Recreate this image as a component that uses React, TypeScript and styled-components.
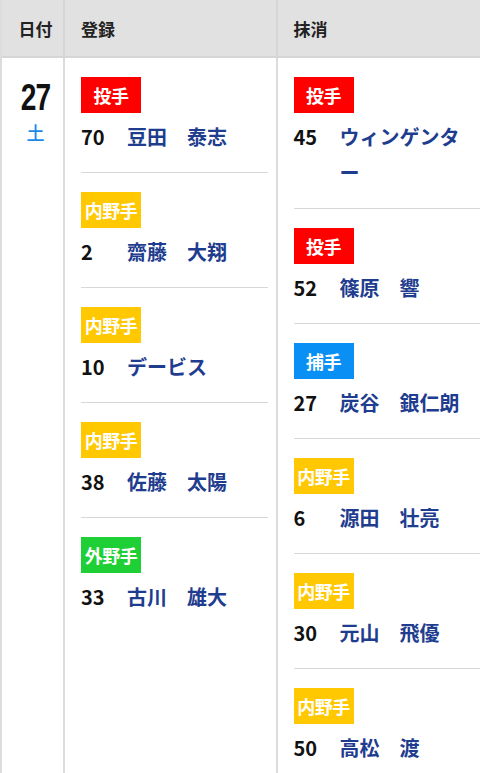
import React from "react";
import styled, { createGlobalStyle } from "styled-components";

const GlobalStyle = createGlobalStyle`
  html, body {
    margin: 0;
    padding: 0;
    overflow-x: hidden;
    background: #fff;
  }
  body {
    font-family: "Noto Sans CJK JP", "Noto Sans", sans-serif;
    color: #111;
  }
`;

const Table = styled.div`
  width: 488px;
  display: grid;
  grid-template-columns: 63px 1fr 1fr;
  grid-template-rows: 58px auto;
  border-left: 2px solid #dcdcdc;
`;

const HeadCell = styled.div<{ $center?: boolean }>`
  background: #e1e1e1;
  border-bottom: 2px solid #d6d6d6;
  border-right: 2px solid #d6d6d6;
  display: flex;
  align-items: center;
  justify-content: ${(p) => (p.$center ? "center" : "flex-start")};
  padding: ${(p) => (p.$center ? "0 0 0 6px" : "0 0 0 16px")};
  font-size: 17px;
  font-weight: 700;
  color: #222;
`;

const DateCell = styled.div`
  border-right: 2px solid #dcdcdc;
  display: flex;
  flex-direction: column;
  align-items: center;
  padding: 19px 0 0 6px;
  min-height: 715px;
`;

const Day = styled.div`
  font-family: "Liberation Sans", "Arial", sans-serif;
  font-size: 37px;
  font-weight: 700;
  line-height: 42px;
  letter-spacing: -1px;
  color: #111;
  transform: scaleX(0.76);
`;

const Weekday = styled.div`
  font-size: 18px;
  font-weight: 500;
  line-height: 26px;
  color: #1a8ae6;
`;

const Column = styled.div`
  border-right: 2px solid #dcdcdc;
  padding: 0 8px 0 16px;
`;

const Item = styled.div`
  padding: 19px 0 17px;
  & + & {
    border-top: 1px solid #d8d8d8;
  }
`;

const Badge = styled.div<{ $color: string }>`
  width: 60px;
  height: 36px;
  background: ${(p) => p.$color};
  color: #fff;
  font-size: 18px;
  font-weight: 700;
  display: flex;
  align-items: center;
  justify-content: center;
  letter-spacing: -0.5px;
`;

const Row = styled.div`
  display: flex;
  margin-top: 6px;
  font-size: 20px;
  font-weight: 700;
  line-height: 36px;
`;

const Num = styled.span`
  flex: 0 0 46px;
  color: #111;
`;

const Name = styled.span`
  flex: 1;
  min-width: 0;
  color: #1f3d8f;
  padding-right: 2px;
`;

const RED = "#ff0000";
const YELLOW = "#ffc800";
const BLUE = "#0a90f5";
const GREEN = "#1ecf35";

type Player = { pos: string; color: string; no: string; name: string };

const added: Player[] = [
  { pos: "投手", color: RED, no: "70", name: "豆田　泰志" },
  { pos: "内野手", color: YELLOW, no: "2", name: "齋藤　大翔" },
  { pos: "内野手", color: YELLOW, no: "10", name: "デービス" },
  { pos: "内野手", color: YELLOW, no: "38", name: "佐藤　太陽" },
  { pos: "外野手", color: GREEN, no: "33", name: "古川　雄大" },
];

const removed: Player[] = [
  { pos: "投手", color: RED, no: "45", name: "ウィンゲンター" },
  { pos: "投手", color: RED, no: "52", name: "篠原　響" },
  { pos: "捕手", color: BLUE, no: "27", name: "炭谷　銀仁朗" },
  { pos: "内野手", color: YELLOW, no: "6", name: "源田　壮亮" },
  { pos: "内野手", color: YELLOW, no: "30", name: "元山　飛優" },
  { pos: "内野手", color: YELLOW, no: "50", name: "高松　渡" },
];

const PlayerList = ({ list }: { list: Player[] }) => (
  <Column>
    {list.map((p) => (
      <Item key={p.no + p.name}>
        <Badge $color={p.color}>{p.pos}</Badge>
        <Row>
          <Num>{p.no}</Num>
          <Name>{p.name}</Name>
        </Row>
      </Item>
    ))}
  </Column>
);

const App = () => {
  return (
    <>
      <GlobalStyle />
      <Table>
        <HeadCell $center>日付</HeadCell>
        <HeadCell>登録</HeadCell>
        <HeadCell>抹消</HeadCell>
        <DateCell>
          <Day>27</Day>
          <Weekday>土</Weekday>
        </DateCell>
        <PlayerList list={added} />
        <PlayerList list={removed} />
      </Table>
    </>
  );
};

export default App;
